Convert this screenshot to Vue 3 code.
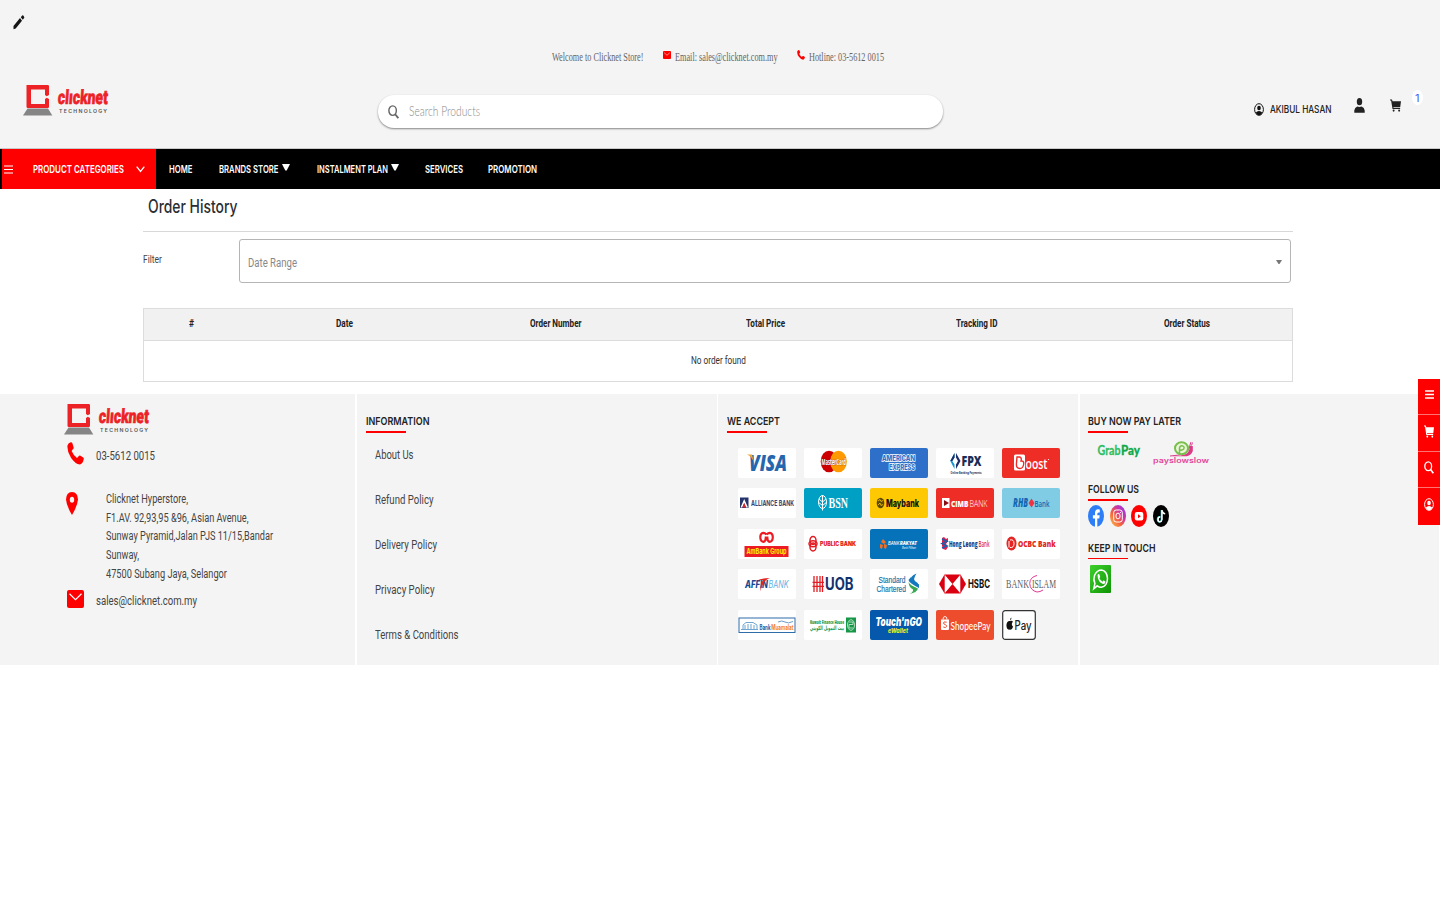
<script setup>
// Condenses a line of text horizontally to the given width in pixels.
const vFit = {
  mounted(el, { value }) {
    const natural = el.getBoundingClientRect().width
    el.style.transform = `scaleX(${value / natural})`
    el.style.marginRight = `${value - natural}px`
  }
}

const navItems = [
  { label: 'HOME', w: 23.5, gap: 26.5 },
  { label: 'BRANDS STORE', w: 59.5, gap: 27, menu: true },
  { label: 'INSTALMENT PLAN', w: 71, gap: 26, menu: true },
  { label: 'SERVICES', w: 38, gap: 25 },
  { label: 'PROMOTION', w: 49, gap: 0 }
]
const columns = [
  { label: '#', w: 5 },
  { label: 'Date', w: 17 },
  { label: 'Order Number', w: 51.5 },
  { label: 'Total Price', w: 39 },
  { label: 'Tracking ID', w: 41.5 },
  { label: 'Order Status', w: 46 }
]
const address = [
  { text: 'Clicknet Hyperstore,', w: 82 },
  { text: 'F1.AV. 92,93,95 &96, Asian Avenue,', w: 142.5 },
  { text: 'Sunway Pyramid,Jalan PJS 11/15,Bandar', w: 167 },
  { text: 'Sunway,', w: 33 },
  { text: '47500 Subang Jaya, Selangor', w: 121 }
]
const links = [
  { text: 'About Us', w: 38.5 },
  { text: 'Refund Policy', w: 58.5 },
  { text: 'Delivery Policy', w: 62 },
  { text: 'Privacy Policy', w: 59.5 },
  { text: 'Terms & Conditions', w: 83.5 }
]
</script>

<template>
  <div class="page">
    <svg class="defs" width="0" height="0">
      <defs>
        <symbol id="logo" viewBox="0 0 86 31">
          <path d="M3.500 0h21.300q1.200 0 1.200 1.200V10l-2.200 1.200L22 10V4.500H8V19h14v-5l1.800-1.200L26 14v7.800q0 1.200-1.200 1.200H4.700q-1.200 0-1.200-1.200z" fill="#ec2227" />
          <path d="M4.500 23.500h20.500L29.300 30.500H0z" fill="#858585" />
          <text x="34.500" y="19" font-family="Roboto, sans-serif" font-size="19.500" font-weight="900" fill="#ec2227" stroke="#ec2227" stroke-width=".6" textLength="50" lengthAdjust="spacingAndGlyphs" transform="translate(1.300 0) skewX(-4)">clıcknet</text>
          <text x="36" y="28.300" font-family="Inter, sans-serif" font-size="5.200" font-weight="600" fill="#555" textLength="48" lengthAdjust="spacing">TECHNOLOGY</text>
        </symbol>
        <symbol id="phone" viewBox="0 0 18 23" preserveAspectRatio="none">
          <path d="M.5 3.500Q1.500.8 4 .2q1.300-.1 1.700 1.100l1.300 4q.2 1.200-.8 2L4.900 8.900q2 4.500 5.700 7l1.700-1.700q.9-.9 2-.4l2.800 1.700q1 .6.6 1.800-.9 4.300-3.900 5.300Q8.500 21.800 4.200 15.700-.1 9.500.5 3.500z" fill="#f00" />
        </symbol>
        <symbol id="mail" viewBox="0 0 17 18" preserveAspectRatio="none">
          <rect width="17" height="18" rx="2" fill="#f00" /><path d="M2.500 3.800l6 5.800 6-5.800" fill="none" stroke="#fff" stroke-width="1.200" />
        </symbol>
        <symbol id="cart" viewBox="0 0 10 13" preserveAspectRatio="none">
          <path d="M0 .5h1.800l.5 1.700H10L9.300 8H3l.2.800h6V9.900H2.300L1 1.600H0z" fill="currentColor" />
          <ellipse cx="3.300" cy="11.600" rx=".9" ry="1.100" fill="currentColor" /><ellipse cx="8.300" cy="11.600" rx=".9" ry="1.100" fill="currentColor" />
        </symbol>
        <symbol id="account" viewBox="0 0 10 13" preserveAspectRatio="none">
          <ellipse cx="5" cy="6.500" rx="4.400" ry="5.800" fill="none" stroke="currentColor" stroke-width="1" />
          <ellipse cx="5" cy="5" rx="1.800" ry="2.200" fill="currentColor" />
          <path d="M1.700 9.800Q3 8 5 8t3.300 1.800Q7 12.300 5 12.300T1.700 9.800z" fill="currentColor" />
        </symbol>
        <symbol id="search" viewBox="0 0 10 13" preserveAspectRatio="none">
          <ellipse cx="4.200" cy="5.200" rx="3.400" ry="4.400" fill="none" stroke="currentColor" stroke-width="1.300" />
          <path d="M6.500 8.600l2.900 3.700" stroke="currentColor" stroke-width="1.700" />
        </symbol>
        <linearGradient id="insta" x1="0" y1="1" x2="1" y2="0"><stop offset="0" stop-color="#fdc64b" /><stop offset=".4" stop-color="#f4603f" /><stop offset=".65" stop-color="#cd35a4" /><stop offset="1" stop-color="#7b3ff2" /></linearGradient>
        <linearGradient id="wa" x1="0" y1="0" x2="1" y2="1"><stop offset="0" stop-color="#3ed02c" /><stop offset="1" stop-color="#109406" /></linearGradient>
      </defs>
    </svg>

    <header class="header">
      <svg class="pencil" width="12" height="15" viewBox="0 0 12 15"><path d="M.5 11L7 3.100 9 5.700 2.700 13.500.5 14.200zM7.800 2.200L9.200.6q.6-.5 1.100 0l.9 1.300q.3.500-.1 1.100L9.800 4.700z" fill="#151515" /></svg>
      <div class="contact">
        <span v-fit="91.5" class="t">Welcome to Clicknet Store!</span>
        <svg class="c-mail" width="8" height="8"><use href="#mail" /></svg>
        <span v-fit="102.5" class="t">Email: sales@clicknet.com.my</span>
        <svg class="c-phone" width="8" height="10"><use href="#phone" /></svg>
        <span v-fit="75" class="t">Hotline: 03-5612 0015</span>
      </div>
      <div class="main-row">
        <svg class="logo" width="86" height="31"><use href="#logo" /></svg>
        <div class="search">
          <svg width="11" height="14"><use href="#search" /></svg>
          <span v-fit="71" class="t">Search Products</span>
        </div>
        <div class="user">
          <svg class="u-acc" width="10" height="13"><use href="#account" /></svg>
          <span v-fit="61.5" class="t u-name">AKIBUL HASAN</span>
          <svg class="u-person" width="11" height="15" viewBox="0 0 11 15"><ellipse cx="5.500" cy="3.700" rx="2.700" ry="3.600" fill="#222" /><path d="M.3 14.700v-2.200q.3-3 3-4 2 .9 4.300 0 2.800 1 3.100 4v2.200z" fill="#222" /></svg>
          <svg class="u-cart" width="11" height="13"><use href="#cart" /></svg>
          <span class="badge"><span v-fit="4.500" class="t">1</span></span>
        </div>
      </div>
    </header>

    <nav class="nav">
      <div class="categories">
        <svg width="9" height="9" viewBox="0 0 9 9"><path d="M0 1h9M0 4.500h9M0 8h9" stroke="#fff" stroke-width="1" /></svg>
        <span v-fit="91" class="t cat-label">PRODUCT CATEGORIES</span>
        <svg class="chevron" width="9" height="7" viewBox="0 0 9 7"><path d="M.7.700l3.800 4.800L8.300.7" fill="none" stroke="#fff" stroke-width="1.300" /></svg>
      </div>
      <div v-for="item in navItems" :key="item.label" class="nav-item" :style="{ marginRight: item.gap + 'px' }">
        <span v-fit="item.w" class="t">{{ item.label }}</span>
        <svg v-if="item.menu" width="8" height="7" viewBox="0 0 8 7"><path d="M0 0h8L4.700 6.500H3.300z" fill="#fff" /></svg>
      </div>
    </nav>

    <main class="content">
      <h1><span v-fit="89.5" class="t">Order History</span></h1>
      <div class="filter">
        <label><span v-fit="19" class="t">Filter</span></label>
        <div class="select">
          <span v-fit="49" class="t">Date Range</span>
          <svg width="6" height="4" viewBox="0 0 6 4"><path d="M0 0h6L3.500 4h-1z" fill="#777" /></svg>
        </div>
      </div>
      <div class="table">
        <div class="thead">
          <div v-for="c in columns" :key="c.label" class="th"><span v-fit="c.w" class="t">{{ c.label }}</span></div>
        </div>
        <div class="empty"><span v-fit="55" class="t">No order found</span></div>
      </div>
    </main>

    <footer class="footer">
      <section class="about">
        <svg class="f-logo" width="86" height="31"><use href="#logo" /></svg>
        <div class="f-row f-phone"><svg width="17" height="23"><use href="#phone" /></svg><span v-fit="59" class="t">03-5612 0015</span></div>
        <div class="f-addr">
          <svg width="12" height="23" viewBox="0 0 12 23"><path d="M6 0q5.800.3 6 7.500Q11.500 14 6 23 .5 14 0 7.500.2.300 6 0zm0 4.700a2.200 3 0 1 0 0 6 2.200 3 0 1 0 0-6z" fill="#f00" fill-rule="evenodd" /></svg>
          <div class="lines"><div v-for="a in address" :key="a.text"><span v-fit="a.w" class="t">{{ a.text }}</span></div></div>
        </div>
        <div class="f-row f-mail"><svg width="17" height="18"><use href="#mail" /></svg><span v-fit="101" class="t">sales@clicknet.com.my</span></div>
      </section>

      <section class="info">
        <h2><span v-fit="63.500" class="t">INFORMATION</span></h2>
        <div class="links"><a v-for="l in links" :key="l.text"><span v-fit="l.w" class="t">{{ l.text }}</span></a></div>
      </section>

      <section class="accept">
        <h2><span v-fit="53" class="t">WE ACCEPT</span></h2>
        <div class="cards">
          <svg class="card" viewBox="0 0 58 30"><text x="11" y="23" class="os" font-size="22" font-weight="800" font-style="italic" fill="#2566ae" textLength="38" lengthAdjust="spacingAndGlyphs">VISA</text><path d="M9 6.500h5l1.800 7.500Q14 8.500 9 6.500z" fill="#f2a52a" /></svg>
          <svg class="card" viewBox="0 0 58 30"><ellipse cx="25" cy="13.500" rx="8.300" ry="10.800" fill="#c00" /><ellipse cx="34.500" cy="13.500" rx="8.300" ry="10.800" fill="#f90" /><text x="17.500" y="16.700" class="os" font-size="8" font-weight="700" fill="#fff" stroke="#7a2a10" stroke-width=".5" paint-order="stroke" textLength="24.500" lengthAdjust="spacingAndGlyphs">MasterCard</text></svg>
          <svg class="card amex" viewBox="0 0 58 30"><g font-size="8" font-weight="800" fill="#2e6fc9" stroke="#fff" stroke-width="1.500" paint-order="stroke"><text x="12" y="13.200" textLength="33" lengthAdjust="spacingAndGlyphs" class="in">AMERICAN</text><text x="19" y="22" textLength="26" lengthAdjust="spacingAndGlyphs" class="in">EXPRESS</text></g></svg>
          <svg class="card" viewBox="0 0 58 30"><path d="M18.500 5v4.500L16.300 13l2.200 3.500V21L14.300 13z" fill="#1597d5" /><path d="M20 5l4.500 8-4.500 8v-4.500l2-3.500-2-3.500z" fill="#1b2c68" /><path d="M18.500 5v4.500L16.300 13h-2z" fill="#1b2c68" /><text x="25.500" y="17.800" class="os" font-size="14.500" font-weight="800" fill="#1b2c55" textLength="20" lengthAdjust="spacingAndGlyphs">FPX</text><text x="14.500" y="25.500" class="os" font-size="4" font-weight="700" fill="#1b2c55" textLength="31" lengthAdjust="spacingAndGlyphs">Online Banking Payments</text></svg>
          <svg class="card boost" viewBox="0 0 58 30"><rect x="12" y="6.500" width="11" height="16" rx="1.500" fill="#fff" /><path d="M15 9h2.500q2.500.500 1.500 4 3-.5 2.700 3-.6 4.500-3.700 4.500-4.200-.2-3.500-5.500z" fill="none" stroke="#ee2b2b" stroke-width="1.400" /><text x="23.500" y="21" class="os" font-size="14" font-weight="600" fill="#fff" textLength="22" lengthAdjust="spacingAndGlyphs">oost</text><circle cx="46.500" cy="11.500" r=".6" fill="#fff" /></svg>

          <svg class="card" viewBox="0 0 58 30"><rect x="2" y="9.500" width="8.500" height="10.500" fill="#24346d" /><path d="M2.500 19.500L6.200 11l3.800 8.500H8L6.200 15l-2 4.500z" fill="#fff" /><path d="M4.300 19.500h3.800L6.200 15z" fill="#e2242b" /><text x="13" y="18.400" class="in" font-size="7.500" font-weight="700" fill="#3a4672" textLength="43" lengthAdjust="spacingAndGlyphs">ALLIANCE BANK</text></svg>
          <svg class="card bsn" viewBox="0 0 58 30"><ellipse cx="18.500" cy="14" rx="4" ry="6.500" fill="none" stroke="#fff" stroke-width="1" /><path d="M18.500 7v15.500M15 11l3.500 3 3.500-3M14.700 14.500l3.800 3 3.800-3" stroke="#fff" stroke-width="1" fill="none" /><text x="24.500" y="19.900" font-family="Liberation Serif, serif" font-size="15" font-weight="700" fill="#fff" textLength="19.500" lengthAdjust="spacingAndGlyphs">BSN</text></svg>
          <svg class="card maybank" viewBox="0 0 58 30"><ellipse cx="10.500" cy="15" rx="3.800" ry="5.300" fill="#5b4b00" /><path d="M8 13l2-1.500 1 2 2-1M8 17l2-2 1 2.500 2-1" stroke="#fec803" fill="none" stroke-width=".8" /><text x="16" y="18.700" class="in" font-size="10" font-weight="800" fill="#111" textLength="33" lengthAdjust="spacingAndGlyphs">Maybank</text></svg>
          <svg class="card cimb" viewBox="0 0 58 30"><rect x="6" y="10" width="7.500" height="10" fill="#fff" /><path d="M8 12l5 3-5 3z" fill="#8b0d15" /><text x="15" y="18.600" class="os" font-size="9" font-weight="800" fill="#fff" textLength="17.500" lengthAdjust="spacingAndGlyphs">CIMB</text><text x="33.500" y="18.600" class="os" font-size="9" font-weight="300" fill="#fff" textLength="18" lengthAdjust="spacingAndGlyphs">BANK</text></svg>
          <svg class="card rhb" viewBox="0 0 58 30"><text x="11" y="19.300" class="os" font-size="12.500" font-weight="800" font-style="italic" fill="#1268b3" textLength="15" lengthAdjust="spacingAndGlyphs">RHB</text><path d="M29.500 10.500l3 4.500-3 4.500-3-4.500z" fill="#ef3340" /><text x="32.500" y="18.900" class="os" font-size="9" font-weight="600" fill="#1268b3" textLength="15" lengthAdjust="spacingAndGlyphs">Bank</text></svg>

          <svg class="card" viewBox="0 0 58 30"><g fill="none" stroke="#ed1c24" stroke-width="2.200"><path d="M28.300 5.500Q27 3.800 25.300 3.800q-3 .4-3 4.500.2 4.200 3 4.500 2.500-.3 2.500-4.300V7.500M28.800 5.500q1.300-1.700 3-1.700 3 .4 3 4.500-.2 4.200-3 4.500-2.500-.3-2.500-4.300V7.500" /></g><rect x="6.500" y="17" width="44" height="11" fill="#ed1c24" /><text x="8.500" y="25.200" class="in" font-size="8" font-weight="700" fill="#fff200" textLength="40" lengthAdjust="spacingAndGlyphs">AmBank Group</text></svg>
          <svg class="card" viewBox="0 0 58 30"><g fill="none" stroke="#e31b23" stroke-width="1.500"><ellipse cx="9" cy="11.500" rx="3" ry="4" /><ellipse cx="9" cy="18" rx="3" ry="4" /><ellipse cx="9" cy="14.700" rx="4" ry="3" /></g><text x="16" y="16.800" class="in" font-size="5.500" font-weight="900" fill="#e31b23" textLength="36" lengthAdjust="spacingAndGlyphs">PUBLIC BANK</text></svg>
          <svg class="card rakyat" viewBox="0 0 58 30"><path d="M13 10l3 3-2 2-3-2zM10 15l3 1-1 4-2-1zM14 15l3 1-1 4-2-1z" fill="#f36f21" /><text x="18" y="15.500" class="in" font-size="5" font-style="italic" font-weight="500" fill="#fff" textLength="11.500" lengthAdjust="spacingAndGlyphs">BANK</text><text x="30" y="15.500" class="in" font-size="5" font-style="italic" font-weight="900" fill="#fff" textLength="17" lengthAdjust="spacingAndGlyphs">RAKYAT</text><text x="32" y="20" class="in" font-size="3.200" font-style="italic" fill="#fff" textLength="14" lengthAdjust="spacingAndGlyphs">Bank Pilihan</text></svg>
          <svg class="card" viewBox="0 0 58 30"><path d="M8 8l2 2 2-1v3l-2 3 2 3-2 3-3-1-1-3V9z" fill="#e31b4f" /><path d="M6 10l5 2.500-5 2 5 2.500-5 2" fill="none" stroke="#1d5ea8" stroke-width="1.500" /><text x="13" y="18.300" class="os" font-size="8.700" font-weight="800" fill="#173f8e" textLength="28.500" lengthAdjust="spacingAndGlyphs">Hong Leong</text><text x="42.500" y="18.300" class="os" font-size="8.700" font-weight="600" fill="#dc2b5c" textLength="11" lengthAdjust="spacingAndGlyphs">Bank</text></svg>
          <svg class="card" viewBox="0 0 58 30"><ellipse cx="9.500" cy="14.500" rx="5" ry="7" fill="#e52521" /><path d="M8 11q4-1 4 3.500t-4 4" fill="none" stroke="#fff" stroke-width="1" /><path d="M7 12v6.500" stroke="#fff" stroke-width="1" /><text x="16" y="18.300" class="os" font-size="9" font-weight="800" fill="#e52521" textLength="37.500" lengthAdjust="spacingAndGlyphs">OCBC Bank</text></svg>

          <svg class="card" viewBox="0 0 58 30"><text x="7" y="19.300" class="in" font-size="10" font-weight="800" font-style="italic" fill="#17488f" textLength="23" lengthAdjust="spacingAndGlyphs">AFFIN</text><text x="30.500" y="19.300" class="in" font-size="10" font-style="italic" fill="#5bb0e4" textLength="20" lengthAdjust="spacingAndGlyphs">BANK</text><path d="M19 11.500q5-2.500 13-2.500-7 2-10 13.500 1-8.500 3-11.500-3-.2-6 .5z" fill="#e52521" /></svg>
          <svg class="card" viewBox="0 0 58 30"><path d="M10 7v16M13 7v16M16 7v16M18.500 7v16M8.500 13.300H20M8.500 17.300H20" stroke="#e31b23" stroke-width="1.300" /><text x="21" y="21" class="in" font-size="17" font-weight="700" fill="#10316f" textLength="28.500" lengthAdjust="spacingAndGlyphs">UOB</text></svg>
          <svg class="card" viewBox="0 0 58 30"><g font-family="Liberation Sans, sans-serif" font-size="8.800" fill="#176fa3" stroke="#176fa3" stroke-width=".15"><text x="8.500" y="13.500" textLength="27" lengthAdjust="spacingAndGlyphs">Standard</text><text x="6.500" y="22.500" textLength="29.500" lengthAdjust="spacingAndGlyphs">Chartered</text></g><path d="M46.500 4.500q-7 3-5.500 6.500 1.500 3 8 5.500l-.5 4q1.500-6-3-8-3-2 1-8z" fill="#1479bd" /><path d="M41 8q-1.500 3 8 7.500v3.500Q39 14 38.500 11z" fill="#1479bd" /><path d="M38.500 13q1 3 9.500 6.500-1 4-8.500 5.500 4-2 3.500-4.500-4-2-4.500-7.500z" fill="#38a852" /></svg>
          <svg class="card" viewBox="0 0 58 30"><path d="M3 15l5.500-9.500h16L30 15l-5.500 9.500h-16z" fill="#db0011" /><path d="M8.700 5.800v18.400L16.500 15zM24.300 5.800v18.400L16.500 15z" fill="#fff" /><text x="32" y="19" class="in" font-size="11.500" font-weight="700" fill="#111" textLength="22" lengthAdjust="spacingAndGlyphs">HSBC</text></svg>
          <svg class="card" viewBox="0 0 58 30"><g font-family="Liberation Serif, serif" font-size="12" fill="#606060"><text x="4" y="19" textLength="23" lengthAdjust="spacingAndGlyphs">BANK</text><text x="30" y="19" textLength="24" lengthAdjust="spacingAndGlyphs">ISLAM</text></g><path d="M35 6.500q-7 1.500-7.300 8 .5 7 7.300 8.500 3 0 6-2" fill="none" stroke="#e33a92" stroke-width="1" /></svg>

          <svg class="card" viewBox="0 0 58 30"><rect x="1" y="8" width="56" height="14.500" fill="#fff" stroke="#2f6da9" stroke-width="1" /><path d="M3 19.500h17M5 19v-4l3-2.500h7l4 2.500v4M7 19v-4M10 19v-5M13 19v-5M16 19v-4" stroke="#6fa6d4" fill="none" stroke-width="1" /><text x="21.500" y="20.200" class="in" font-size="7" font-weight="700" fill="#225b9e" textLength="11" lengthAdjust="spacingAndGlyphs">Bank</text><text x="33.300" y="20.200" class="in" font-size="7" font-weight="700" fill="#f3801f" textLength="22" lengthAdjust="spacingAndGlyphs">Muamalat</text><path d="M40 12q4-2 7 0t8-.5" stroke="#6d9ac4" fill="none" stroke-width="1" /></svg>
          <svg class="card" viewBox="0 0 58 30"><text x="6" y="13.500" class="os" font-size="5.500" font-weight="800" fill="#169647" textLength="34" lengthAdjust="spacingAndGlyphs">Kuwait Finance House</text><text x="6" y="20" font-size="6" font-weight="700" font-family="DejaVu Sans, sans-serif" fill="#169647" textLength="34" lengthAdjust="spacingAndGlyphs">بيت التمويل الكويتي</text><rect x="42" y="7.500" width="10" height="15" fill="#169647" /><g fill="none" stroke="#bfe5cb" stroke-width=".9"><ellipse cx="47" cy="15" rx="3.500" ry="5.300" /><path d="M45 12h4v2.500h-4V18h4" /></g></svg>
          <svg class="card tng" viewBox="0 0 58 30"><text x="5.500" y="15.500" class="in" font-size="12" font-weight="900" font-style="italic" fill="#fff" textLength="46.500" lengthAdjust="spacingAndGlyphs">Touch'nGO</text><text x="18" y="22.500" class="in" font-size="6.500" font-weight="800" font-style="italic" fill="#e6ec2b" textLength="20" lengthAdjust="spacingAndGlyphs">eWallet</text></svg>
          <svg class="card shopee" viewBox="0 0 58 30"><path d="M5 9.500h8v9.500q0 1-1 1H6q-1 0-1-1z" fill="#fff" /><path d="M7 9.500q0-3 2-3t2 3" fill="none" stroke="#fff" stroke-width=".9" /><path d="M10.700 12.200q-3.400-1-3.200.800.3 1.300 1.700 1.600 1.700.7 1.500 1.900-.6 1.800-3.400.5" stroke="#ee4d2d" fill="none" stroke-width="1" /><text x="14.500" y="19.800" class="lato" font-size="11.500" font-weight="500" fill="#fff" textLength="40" lengthAdjust="spacingAndGlyphs">ShopeePay</text></svg>
          <svg class="card apple" viewBox="0 0 58 30"><rect x=".7" y=".7" width="32.600" height="28.600" rx="2.500" fill="#fff" stroke="#333" stroke-width="1.200" /><path d="M8 11q2.200-1 2.900.800-2.300 2.700.2 5-1.200 3.500-3.100 2.700Q4.500 20.500 4.400 15 5 10.500 8 11zm0-.7q0-2 1.500-2.800.1 2-1.500 2.800z" fill="#111" /><text x="12.500" y="19.500" class="in" font-size="12.500" font-weight="500" fill="#222" textLength="17" lengthAdjust="spacingAndGlyphs">Pay</text></svg>
        </div>
      </section>

      <section class="social">
        <h2><span v-fit="93" class="t">BUY NOW PAY LATER</span></h2>
        <div class="later">
          <svg class="grab" width="44" height="20" viewBox="0 0 44 20"><g font-family="Lato, sans-serif" font-size="14" stroke-width=".3"><text x=".5" y="13.500" font-weight="700" fill="#2dbd61" stroke="#2dbd61" textLength="23" lengthAdjust="spacingAndGlyphs">Grab</text><text x="24" y="13.500" font-weight="900" fill="#10a94c" stroke="#10a94c" textLength="19" lengthAdjust="spacingAndGlyphs">Pay</text></g></svg>
          <svg class="snail" width="57" height="26" viewBox="0 0 57 26"><path d="M17 15q8-.5 13-2 6-1.500 7-9l1-3M39.500 1.500l-1 3" fill="none" stroke="#dc3a88" stroke-width="1" /><path d="M19 15.200q10-.5 14-2.200 3.500-2 4-8h2.800v5q-1.500 4.500-6 5.200z" fill="#dc3a88" /><ellipse cx="28.500" cy="7.300" rx="6.500" ry="6" fill="#e9f5d8" stroke="#79bf4c" stroke-width="2" /><path d="M26.500 12V7q.5-2.500 2.500-2.300 3 .8 1.700 3.300-1.500 1.500-3.500 1" fill="none" stroke="#79bf4c" stroke-width="1.500" /><text x="0" y="22" class="in" font-size="7" font-weight="600" fill="#e4469b" textLength="56" lengthAdjust="spacingAndGlyphs">payslowslow</text></svg>
        </div>
        <h2><span v-fit="51" class="t">FOLLOW US</span></h2>
        <div class="icons">
          <svg width="16" height="22" viewBox="0 0 16 22"><ellipse cx="8" cy="11" rx="8" ry="11" fill="#2d7df6" /><path d="M7 21.900V13.500H4.900v-3.200H7V8q.2-3.600 3-3.700l1.800.2v2.900h-1.200Q9.300 7.500 9.300 9v1.300h2.400l-.4 3.200h-2V22z" fill="#fff" /></svg>
          <svg width="16" height="22" viewBox="0 0 16 22"><ellipse cx="8" cy="11" rx="8" ry="11" fill="url(#insta)" /><rect x="3.700" y="5" width="8.600" height="12" rx="2.500" fill="none" stroke="#fff" /><ellipse cx="8" cy="11" rx="2.100" ry="2.900" fill="none" stroke="#fff" /><circle cx="10.500" cy="7.500" r=".6" fill="#fff" /></svg>
          <svg width="16" height="22" viewBox="0 0 16 22"><ellipse cx="8" cy="11" rx="8" ry="11" fill="#f00" /><rect x="3.800" y="7" width="8.500" height="8.500" rx="2" fill="#fff" /><path d="M7 9.300l2.800 2L7 13.300z" fill="#f00" /></svg>
          <svg width="16" height="22" viewBox="0 0 16 22"><ellipse cx="8" cy="11" rx="8" ry="11" fill="#000" /><path d="M8.500 5v9.500q-.3 2.300-2.100 2.400-1.900-.2-1.900-2.600.2-2.600 2.600-2.500" fill="none" stroke="#43e7ef" stroke-width="1.500" /><path d="M9 5v9.500q-.3 2.300-2 2.400-1.900-.2-1.900-2.600.2-2.400 2.300-2.400M9 5.300q.5 3 3.200 3.600" fill="none" stroke="#fff" stroke-width="1.400" /></svg>
        </div>
        <h2><span v-fit="67.500" class="t">KEEP IN TOUCH</span></h2>
        <svg class="whatsapp" width="21" height="28" viewBox="0 0 21 28"><rect width="21" height="28" rx="1" fill="url(#wa)" /><path d="M3.700 23.800l1.200-5.300Q3 14.500 4.500 10.500 7 5 11.500 5q5.600 1 6 8.500-.4 8-6.200 8.700-2 .1-4-1.400z" fill="none" stroke="#fff" stroke-width="1.500" /><path d="M7.500 10q.9-1.500 1.800-.8l.9 2.500-.8 1.600q1.300 2.600 3.100 3.400l1.200-1.400 1.800 1.400q-.2 2.600-2.500 2.400-5.300-2-5.500-9.100z" fill="#fff" /></svg>
      </section>
    </footer>

    <aside class="side">
      <div><svg width="9" height="9" viewBox="0 0 9 9"><path d="M0 1h9M0 4.500h9M0 8h9" stroke="#fff" stroke-width="1.300" /></svg></div>
      <div><svg width="10" height="13"><use href="#cart" /></svg></div>
      <div><svg width="10" height="13"><use href="#search" /></svg></div>
      <div><svg width="10" height="13"><use href="#account" /></svg></div>
    </aside>
  </div>
</template>

<style>
body { background: #fff; }
</style>

<style scoped>
.page { position: relative; width: 1440px; height: 900px; overflow: hidden; background: #fff; font-family: Roboto, sans-serif; color: #333; }
.defs { position: absolute; }
.t { display: inline-block; flex: none; white-space: nowrap; transform-origin: 0 50%; }
.page svg { display: block; flex: none; }
.header { height: 149px; box-sizing: border-box; padding-top: 15px; background: #f4f4f4; border-bottom: 1px solid #c9c9c9; }
.pencil { margin-left: 13px; }
.contact { display: flex; height: 16px; margin-top: 19px; padding-left: 552px; font: 12px/16px "Liberation Serif", serif; color: #666; }
.c-mail { margin: 2px 4px 0 19.500px; }
.c-phone { margin: 1px 4px 0 19.500px; }
.main-row { display: flex; align-items: flex-start; height: 60px; margin-top: 20px; }
.logo { margin-left: 23px; }
.search { display: flex; align-items: center; width: 565px; height: 33px; box-sizing: border-box; margin: 10px 0 0 269px; padding-left: 10px; gap: 10px; border-radius: 16px; background: #fff; box-shadow: 0 1px 2px rgba(0,0,0,.45); font: 300 13px/20px Lato, sans-serif; color: #888; }
.search .t { margin-top: -1px; }
.search svg { color: #666; }
.user { display: flex; align-items: flex-start; margin-left: 311px; color: #111; }
.u-acc { margin-top: 18px; }
.u-name { margin: 14px 0 0 6px; font: 500 11px/20px Inter, sans-serif; color: #222; }
.u-person { margin: 13px 0 0 22px; }
.u-cart { margin: 14px 0 0 25px; color: #222; }
.badge { display: flex; justify-content: center; width: 11px; height: 15px; margin: 5px 0 0 11px; border-radius: 50%; background: #fff; font: 10.500px/17px Inter, sans-serif; color: #4b5df5; }
.nav { display: flex; height: 40px; background: #000; color: #fff; font: 600 10.500px/41px Inter, sans-serif; }
.categories { display: flex; align-items: center; width: 154px; height: 40px; box-sizing: border-box; margin: 0 13px 0 2px; padding-left: 2px; background: #f00; }
.cat-label { margin-left: 20px; }
.chevron { margin-left: 11.500px; }
.nav-item { display: flex; gap: 3px; }
.nav-item svg { margin-top: 15px; }
.content { width: 1150px; height: 205px; margin-left: 143px; }
.content h1 { height: 42px; margin: 0; padding-left: 5px; border-bottom: 1px solid #d8d8d8; font: 500 18px/35px Inter, sans-serif; color: #2a2e33; }
.filter { display: flex; margin-top: 7px; font-size: 11px; color: #444; }
.filter label { width: 96px; line-height: 41px; }
.select { display: flex; align-items: center; justify-content: space-between; width: 1052px; height: 44px; box-sizing: border-box; padding: 2px 8px 0; border: 1px solid #b5b5b5; border-radius: 3px; font-size: 12.500px; color: #888; }
.table { height: 73.500px; margin-top: 25px; box-sizing: border-box; border: 1px solid #dcdcdc; font-size: 11px; }
.thead { display: grid; grid-template-columns: 95px repeat(5, 1fr); height: 31px; background: #f1f1f1; border-bottom: 1px solid #dcdcdc; font-weight: 700; line-height: 30px; color: #222; }
.th, .empty { display: flex; justify-content: center; }
.th + .th { padding-left: 1px; }
.empty { line-height: 40px; }
.footer { display: grid; grid-template-columns: 355px 360px 360px 358px; column-gap: 2px; height: 271px; background: linear-gradient(to right, #f4f4f4 355px, #fff 355px 357px, #f4f4f4 357px 717px, #fff 717px 718px, #f4f4f4 718px 1078px, #fff 1078px 1080px, #f4f4f4 1080px 1439px, #fff 1439px); font-size: 12px; color: #444; }
.about { padding: 10px 0 0 64px; }
.f-row { display: flex; padding-left: 3px; }
.f-phone { height: 23px; margin-top: 7px; line-height: 28px; gap: 12px; }
.f-addr { display: flex; height: 94px; margin-top: 25px; padding-left: 2px; gap: 28px; line-height: 18.700px; }
.f-addr svg { margin-top: 2px; }
.f-mail { height: 22px; margin-top: 6px; line-height: 22px; gap: 12px; }
.footer h2 { width: max-content; height: 21px; margin: 0; font: 600 11px/22px Inter, sans-serif; color: #222; }
.footer h2::after { content: ''; display: block; width: 40px; height: 1.500px; margin-top: -1px; background: #f00; }
.info { padding: 16px 0 0 9px; }
.links { display: flex; flex-direction: column; margin: 2px 0 0 9px; line-height: 45px; }
.links a { height: 45px; }
.accept { padding: 16px 0 0 8px; }
.cards { display: grid; grid-template-columns: repeat(5, 58px); column-gap: 8.200px; row-gap: 10.500px; margin: 16.500px 0 0 10.500px; }
.card { width: 58px; height: 30px; overflow: visible; border-radius: 2px; background: #fff; }
.amex { background: #2e6fc9; }
.boost, .cimb { background: #ef2d27; }
.bsn { background: #00a0c4; }
.maybank { background: #fec803; }
.rhb { background: #81cce5; }
.rakyat { background: #0672ba; }
.tng { background: #0558ab; }
.shopee { background: #ee4d2d; }
.apple { background: none; }
.os { font-family: "Open Sans", sans-serif; }
.in { font-family: Inter, sans-serif; }
.lato { font-family: Lato, sans-serif; }
.social { padding: 16px 0 0 7px; }
.later { display: flex; align-items: flex-start; gap: 12px; height: 38px; margin: 9px 0 0 9px; }
.grab, .snail { overflow: visible; margin-top: .5px; }
.icons { display: flex; gap: 5.500px; height: 32px; margin-top: 5.500px; }
.whatsapp { margin: 7px 0 0 2px; }
.side { position: absolute; top: 379px; right: 0; width: 22px; color: #fff; }
.side div { display: flex; align-items: center; justify-content: center; height: 36.400px; box-sizing: border-box; padding-bottom: 4px; background: #f00; border-bottom: 1px solid #ff7373; }
.side div:last-child { border-bottom: 0; }
</style>
